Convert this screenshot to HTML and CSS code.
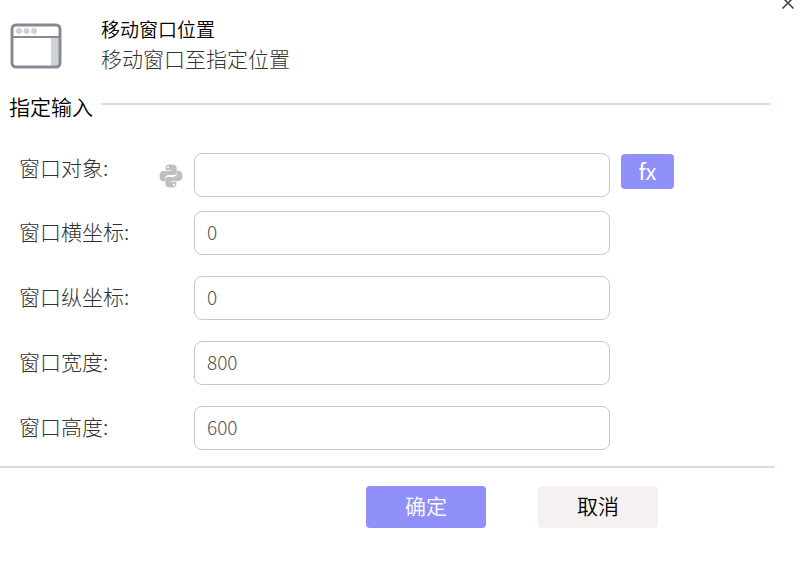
FILE: index.html
```html
<!DOCTYPE html>
<html lang="zh-CN">
<head>
  <meta charset="UTF-8">
  <title>移动窗口位置</title>
  <link rel="stylesheet" href="styles.css">
</head>
<body>
  <button class="close" type="button" aria-label="关闭">
    <svg width="14" height="14" viewBox="0 0 14 14">
      <path d="M1.5 1.5L12.5 12.5M12.5 1.5L1.5 12.5" stroke="#444" stroke-width="1.6" fill="none"/>
    </svg>
  </button>

  <header class="header">
    <svg class="window-icon" width="52" height="46" viewBox="0 0 52 46">
      <path d="M41 14h8v29h-8z" fill="#ced2d7"/>
      <path d="M2 2h48v12H2z" fill="#fff"/>
      <rect x="2" y="2" width="48" height="42" rx="4" fill="none" stroke="#898996" stroke-width="3"/>
      <path d="M2 14h48" stroke="#898996" stroke-width="2"/>
      <circle cx="9" cy="8" r="3" fill="#ced2d7"/>
      <circle cx="16.5" cy="8" r="3" fill="#ced2d7"/>
      <circle cx="24" cy="8" r="3" fill="#ced2d7"/>
    </svg>
    <div>
      <h1 class="title">移动窗口位置</h1>
      <p class="subtitle">移动窗口至指定位置</p>
    </div>
  </header>

  <form>
    <div class="section-head">
      <h2 class="section-title">指定输入</h2>
      <span class="line"></span>
    </div>

    <div class="fields">
      <div class="row row-object">
        <label for="target">窗口对象:</label>
        <svg class="python" width="24" height="24" viewBox="0 0 24 24" fill="#bfbfbf">
          <path d="M11.9.5C6.800.5 6.600 2.700 6.600 3.800v2.400h5.500v.8H4.400C2 7 .5 8.900.5 12s1.500 5.300 3.600 5.300h2v-2.600c0-2.200 1.700-3.600 3.700-3.600h5.100c1.600 0 2.800-1.300 2.800-2.900V3.800c0-2.200-2.200-3.300-5.800-3.300zM9 2.300a1 1 0 1 1 0 2 1 1 0 0 1 0-2z"/>
          <path d="M12.100 23.500c5.100 0 5.300-2.200 5.300-3.300v-2.400h-5.500V17h7.700c2.400 0 3.900-1.900 3.900-5s-1.500-5.300-3.600-5.300h-2v2.600c0 2.200-1.700 3.600-3.700 3.600H9.100c-1.600 0-2.800 1.300-2.800 2.900v4.400c0 2.200 2.200 3.300 5.800 3.300zm2.900-1.800a1 1 0 1 1 0-2 1 1 0 0 1 0 2z"/>
        </svg>
        <input id="target" type="text">
        <button class="fx" type="button">fx</button>
      </div>
      <div class="row">
        <label for="pos-x">窗口横坐标:</label>
        <input id="pos-x" type="text" value="0">
      </div>
      <div class="row">
        <label for="pos-y">窗口纵坐标:</label>
        <input id="pos-y" type="text" value="0">
      </div>
      <div class="row">
        <label for="width">窗口宽度:</label>
        <input id="width" type="text" value="800">
      </div>
      <div class="row">
        <label for="height">窗口高度:</label>
        <input id="height" type="text" value="600">
      </div>
    </div>

    <div class="actions">
      <button class="btn btn-ok" type="submit">确定</button>
      <button class="btn btn-cancel" type="button">取消</button>
    </div>
  </form>
</body>
</html>
```

FILE: styles.css
```css
* {
  box-sizing: border-box;
}
body {
  margin: 0;
  background-color: #fff;
  color: #000;
  font-family: "Noto Sans CJK SC", sans-serif;
  font-size: 21px;
}
h1, h2, p {
  margin: 0;
  font-weight: 350;
}
button {
  border: none;
  padding: 0 0 4px;
  font-family: inherit;
  font-weight: 350;
  cursor: pointer;
}

.close {
  position: absolute;
  top: -4px;
  right: 13px;
  width: 14px;
  height: 14px;
  padding: 0;
  background: none;
}
.close svg {
  display: block;
}

.header {
  display: flex;
  gap: 39px;
  padding: 14px 10px 0;
}
.window-icon {
  margin-top: 9px;
}
.title {
  font-size: 19px;
  line-height: 30px;
}
.subtitle {
  font-weight: 300;
  font-size: 21px;
  line-height: 28px;
  color: #333;
}

.section-head {
  display: flex;
  gap: 8px;
  padding: 19px 37px 0 9px;
}
.section-title {
  font-size: 21px;
  line-height: 30px;
}
.line {
  flex: 1;
  height: 2px;
  margin-top: 12px;
  background-color: #e8d5e8;
}

.fields {
  display: grid;
  gap: 21px;
  margin-right: 33px;
  padding: 32px 0 16px 19px;
  border-bottom: 2px solid #e8d5e8;
}
.row {
  display: grid;
  grid-template-columns: 140px 35px 1fr 154px;
  align-items: center;
  margin-right: 11px;
}
.row label {
  padding-bottom: 4px;
  font-weight: 300;
  line-height: 28px;
  color: #333;
}
.row input {
  grid-column: 3;
  width: 100%;
  height: 44px;
  padding: 0 12px 4px;
  border: 1px solid #c8c8c8;
  border-radius: 8px;
  background-color: #fff;
  color: #555;
  font-family: inherit;
  font-size: 19px;
  font-weight: 300;
}
.row-object {
  align-items: start;
  margin-bottom: -7px;
}
.python {
  margin-top: 11px;
}
.fx {
  width: 53px;
  height: 35px;
  margin: 1px 0 0 11px;
  border-radius: 4px;
  background-color: #9090fa;
  color: #fff;
  font-size: 22px;
  font-weight: 400;
}

.actions {
  display: flex;
  justify-content: flex-end;
  gap: 52px;
  padding: 18px 150px 18px 0;
}
.btn {
  width: 120px;
  height: 42px;
  border-radius: 4px;
  font-size: 21px;
}
.btn-ok {
  background-color: #9090fa;
  color: #fff;
}
.btn-cancel {
  background-color: #f5f1f1;
  color: #000;
}
```
